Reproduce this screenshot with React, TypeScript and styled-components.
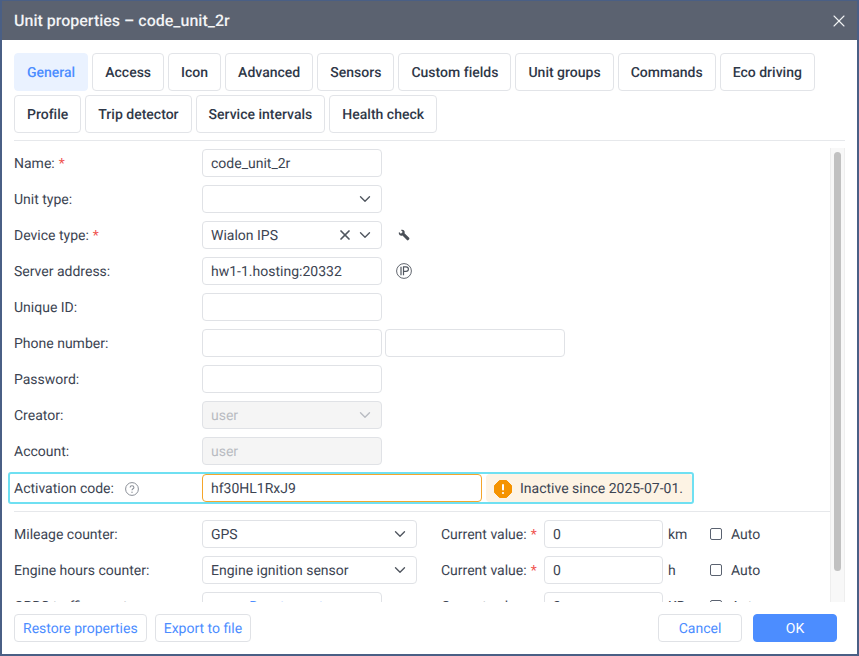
import { createGlobalStyle, styled } from "styled-components";
import { ChevronDown, X } from "lucide-react";

const GlobalStyle = createGlobalStyle`
  html, body {
    margin: 0;
    padding: 0;
    background: #4a5f85;
  }
  * {
    box-sizing: border-box;
  }
`;

const Dialog = styled.div`
  width: 859px;
  height: 656px;
  padding: 0 2px 2px 2px;
  background: #4a5f85;
  font-family: Roboto, "Liberation Sans", sans-serif;
  font-size: 14px;
  text-rendering: geometricPrecision;
  color: #3c4452;
  display: flex;
  flex-direction: column;
  overflow: hidden;
`;

const Header = styled.div`
  height: 39px;
  flex: none;
  margin-top: 1px;
  padding: 0 8px 0 12px;
  background: #5b6270;
  color: #f2f3f5;
  font-size: 16px;
  font-weight: 500;
  display: flex;
  align-items: center;
  justify-content: space-between;
`;

const Body = styled.div`
  flex: 1;
  min-height: 0;
  background: #fff;
  padding: 13px 12px 12px;
  display: flex;
  flex-direction: column;
`;

const Tabs = styled.div`
  display: flex;
  flex-wrap: wrap;
  gap: 4px;
  padding-bottom: 7px;
  border-bottom: 1px solid #e6e8eb;
  flex: none;
`;

const Tab = styled.div<{ $active?: boolean }>`
  height: 38px;
  padding: 1px 12px 0;
  border: 1px solid ${(p) => (p.$active ? "#eaf2ff" : "#e2e4e8")};
  border-radius: 4px;
  background: ${(p) => (p.$active ? "#eaf2ff" : "#fff")};
  color: ${(p) => (p.$active ? "#4c8dff" : "#2f3848")};
  font-weight: 500;
  letter-spacing: 0.008px;
  display: flex;
  align-items: center;
`;

const Scroller = styled.div`
  flex: 1;
  min-height: 0;
  margin-left: -6px;
  overflow: hidden;
  display: flex;
`;

const Form = styled.div`
  flex: 1;
  min-width: 0;
  padding: 8px 0 0 6px;
  display: flex;
  flex-direction: column;
  gap: 8px;
`;

const Track = styled.div`
  width: 15px;
  flex: none;
  margin-top: 7px;
  padding: 4px 3px 0 3px;
  background: #f8f8f8;
  border-left: 1px solid #eeeeee;
  border-right: 1px solid #eeeeee;
`;

const Thumb = styled.div`
  height: 419px;
  border-radius: 4px;
  background: #c1c1c1;
`;

const Row = styled.div`
  height: 28px;
  flex: none;
  display: flex;
  align-items: center;
`;

const Label = styled.div`
  width: 188px;
  flex: none;
  padding-top: 1px;
  display: flex;
  align-items: center;
  white-space: nowrap;
`;

const Star = styled.span`
  color: #f0524f;
  margin-left: 4px;
`;

const Field = styled.div<{ $w?: number; $ml?: number; $disabled?: boolean; $warn?: boolean }>`
  width: ${(p) => p.$w ?? 180}px;
  height: 28px;
  flex: none;
  margin-left: ${(p) => p.$ml ?? 0}px;
  padding: 1px 7px 0 8px;
  border: 1px solid ${(p) => (p.$warn ? "#f5a62b" : "#e0e2e6")};
  border-radius: 4px;
  background: ${(p) => (p.$disabled ? "#f5f5f5" : "#fff")};
  color: ${(p) => (p.$disabled ? "#b9bcc2" : "#3c4452")};
  display: flex;
  align-items: center;
  justify-content: space-between;
  white-space: nowrap;
`;

const SelectIcons = styled.div`
  display: flex;
  align-items: center;
  gap: 3px;
  margin-top: -1px;
`;

const Chevron = styled(ChevronDown).attrs({ size: 18, strokeWidth: 1.8 })`
  margin-top: -1px;
  flex: none;
`;

const ClearIcon = styled(X).attrs({ size: 16, strokeWidth: 2.6 })`
  flex: none;
`;

const CloseIcon = styled(X).attrs({ size: 20, strokeWidth: 1.3 })`
  flex: none;
  color: #f2f3f5;
`;

const SideIcon = styled.div`
  margin-left: 14px;
  width: 16px;
  display: flex;
  align-items: center;
  justify-content: center;
  color: #50565f;
`;

const Highlight = styled.div`
  width: 686px;
  height: 32px;
  margin: -1px 0 -1px -6px;
  padding: 0 0 0 4px;
  border: 2px solid #6fe0f2;
  border-radius: 3px;
  display: flex;
  align-items: center;
  flex: none;
`;

const HelpGap = styled.span`
  margin-left: 11px;
  display: flex;
`;

const Notice = styled.div`
  height: 28px;
  margin-left: 4px;
  padding: 1px 4px 0 8px;
  flex: 1;
  background: #fdf3e4;
  border-radius: 4px;
  display: flex;
  align-items: center;
  gap: 8px;
  white-space: nowrap;
`;

const Divider = styled.div`
  height: 1px;
  flex: none;
  background: #e6e8eb;
`;

const CurrentLabel = styled.div<{ $ml: number }>`
  width: 103px;
  margin-left: ${(p) => p.$ml}px;
  padding-top: 1px;
  flex: none;
  display: flex;
  align-items: center;
  white-space: nowrap;
`;

const Unit = styled.div`
  width: 42px;
  margin-left: 5px;
  padding-top: 1px;
  flex: none;
`;

const AutoBox = styled.div`
  width: 12px;
  height: 12px;
  margin-right: 9px;
  border: 1px solid #5a6270;
  border-radius: 2px;
  flex: none;
`;

const AutoText = styled.span`
  padding-top: 1px;
`;

const LinkText = styled.span`
  color: #4c8dff;
  margin: 0 auto;
`;

const Footer = styled.div`
  flex: none;
  height: 28px;
  margin-top: 12px;
  display: flex;
  align-items: center;
  justify-content: space-between;
`;

const ButtonGroup = styled.div<{ $gap: number; $mr?: number }>`
  display: flex;
  gap: ${(p) => p.$gap}px;
  margin-right: ${(p) => p.$mr ?? 0}px;
`;

const Button = styled.div<{ $primary?: boolean; $w?: number }>`
  height: 28px;
  width: ${(p) => (p.$w ? `${p.$w}px` : "auto")};
  padding: 1px 8px 0;
  border: 1px solid ${(p) => (p.$primary ? "#4c8dff" : "#e0e2e6")};
  border-radius: 4px;
  background: ${(p) => (p.$primary ? "#4c8dff" : "#fff")};
  color: ${(p) => (p.$primary ? "#fff" : "#4c8dff")};
  display: flex;
  align-items: center;
  justify-content: center;
  white-space: nowrap;
`;

const WrenchIcon = () => (
  <svg width="12" height="12" viewBox="0 0 14 14" fill="#4a4f57">
    <path d="M1.200 3.400 3.400 5.500 5.500 3.600 3.400 1.300C5.300 .4 7.500 1.300 7.800 3.300 7.900 4 7.800 4.500 7.600 5L13 10.300C13.500 10.800 13.500 11.600 13 12.100L12.200 12.900C11.700 13.400 10.900 13.400 10.400 12.900L5.200 7.500C3.400 8.200 1.500 7.300 1 5.500 .8 4.800 .9 4 1.200 3.400Z" />
  </svg>
);

const IpIcon = () => (
  <svg width="16" height="16" viewBox="0 0 16 16" fill="none" stroke="#50565f">
    <circle cx="8" cy="8" r="7.400" strokeWidth="0.900" />
    <path d="M5 3.800V12.200M7.500 12.200V3.800H10C11.500 3.800 12.400 4.800 12.400 6.100 12.400 7.400 11.500 8.400 10 8.400H7.500" strokeWidth="1.200" />
  </svg>
);

const HelpIcon = () => (
  <svg width="14" height="14" viewBox="0 0 14 14" fill="none" stroke="#8a8f97">
    <circle cx="7" cy="7" r="6.400" strokeWidth="1" />
    <path d="M5.100 5.500C5.100 4.400 6 3.700 7 3.700 8.100 3.700 8.900 4.400 8.900 5.400 8.900 6.700 7 6.800 7 8.300" strokeWidth="1.100" />
    <circle cx="7" cy="10.200" r="0.700" fill="#8a8f97" stroke="none" />
  </svg>
);

const WarnIcon = () => (
  <svg width="18" height="18" viewBox="0 0 18 18">
    <path d="M5.500 0.500H12.500L17.500 5.500V12.500L12.500 17.500H5.500L0.500 12.500V5.500Z" fill="#f59300" strokeLinejoin="round" stroke="#f59300" />
    <rect x="8" y="4" width="2" height="6.500" rx="1" fill="#fff" />
    <circle cx="9" cy="13" r="1.100" fill="#fff" />
  </svg>
);

const tabRows = [
  "General",
  "Access",
  "Icon",
  "Advanced",
  "Sensors",
  "Custom fields",
  "Unit groups",
  "Commands",
  "Eco driving",
  "Profile",
  "Trip detector",
  "Service intervals",
  "Health check",
];

const counters = [
  { label: "Mileage counter:", value: "GPS", unit: "km" },
  { label: "Engine hours counter:", value: "Engine ignition sensor", unit: "h" },
];

export default function App() {
  return (
    <>
      <GlobalStyle />
      <Dialog>
        <Header>
          <span>Unit properties – code_unit_2r</span>
          <CloseIcon />
        </Header>
        <Body>
          <Tabs>
            {tabRows.map((t) => (
              <Tab key={t} $active={t === "General"}>
                {t}
              </Tab>
            ))}
          </Tabs>
          <Scroller>
            <Form>
              <Row>
                <Label>
                  Name:<Star>*</Star>
                </Label>
                <Field>code_unit_2r</Field>
              </Row>
              <Row>
                <Label>Unit type:</Label>
                <Field>
                  <span />
                  <Chevron color="#50565f" />
                </Field>
              </Row>
              <Row>
                <Label>
                  Device type:<Star>*</Star>
                </Label>
                <Field>
                  Wialon IPS
                  <SelectIcons>
                    <ClearIcon color="#50565f" />
                    <Chevron color="#50565f" />
                  </SelectIcons>
                </Field>
                <SideIcon>
                  <WrenchIcon />
                </SideIcon>
              </Row>
              <Row>
                <Label>Server address:</Label>
                <Field>hw1-1.hosting:20332</Field>
                <SideIcon>
                  <IpIcon />
                </SideIcon>
              </Row>
              <Row>
                <Label>Unique ID:</Label>
                <Field />
              </Row>
              <Row>
                <Label>Phone number:</Label>
                <Field />
                <Field $ml={3} />
              </Row>
              <Row>
                <Label>Password:</Label>
                <Field />
              </Row>
              <Row>
                <Label>Creator:</Label>
                <Field $disabled>
                  user
                  <Chevron color="#b9bcc2" />
                </Field>
              </Row>
              <Row>
                <Label>Account:</Label>
                <Field $disabled>user</Field>
              </Row>
              <Highlight>
                <Label>
                  Activation code:
                  <HelpGap>
                    <HelpIcon />
                  </HelpGap>
                </Label>
                <Field $w={280} $warn>
                  hf30HL1RxJ9
                </Field>
                <Notice>
                  <WarnIcon />
                  Inactive since 2025-07-01.
                </Notice>
              </Highlight>
              <Divider />
              {counters.map((c) => (
                <Row key={c.label}>
                  <Label>{c.label}</Label>
                  <Field $w={215}>
                    {c.value}
                    <Chevron color="#50565f" />
                  </Field>
                  <CurrentLabel $ml={24}>
                    Current value:<Star>*</Star>
                  </CurrentLabel>
                  <Field $w={119}>0</Field>
                  <Unit>{c.unit}</Unit>
                  <AutoBox />
                  <AutoText>Auto</AutoText>
                </Row>
              ))}
              <Row>
                <Label>GPRS traffic counter:</Label>
                <Field>
                  <LinkText>Reset counter</LinkText>
                </Field>
                <CurrentLabel $ml={59}>Current value:</CurrentLabel>
                <Field $w={119}>0</Field>
                <Unit>KB</Unit>
                <AutoBox />
                <AutoText>Auto</AutoText>
              </Row>
            </Form>
            <Track>
              <Thumb />
            </Track>
          </Scroller>
          <Footer>
            <ButtonGroup $gap={8}>
              <Button>Restore properties</Button>
              <Button>Export to file</Button>
            </ButtonGroup>
            <ButtonGroup $gap={11} $mr={8}>
              <Button $w={84}>Cancel</Button>
              <Button $primary $w={84}>
                OK
              </Button>
            </ButtonGroup>
          </Footer>
        </Body>
      </Dialog>
    </>
  );
}
